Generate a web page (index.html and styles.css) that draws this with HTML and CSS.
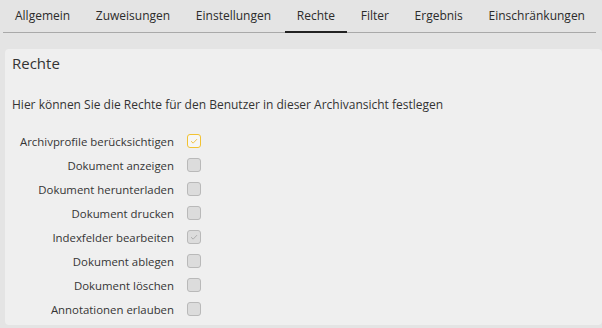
FILE: index.html
```html
<!DOCTYPE html>
<html lang="de">
<head>
<meta charset="utf-8">
<link rel="stylesheet" href="styles.css">
</head>
<body>
<nav class="tabs">
  <div class="tab">Allgemein</div>
  <div class="tab">Zuweisungen</div>
  <div class="tab">Einstellungen</div>
  <div class="tab active">Rechte</div>
  <div class="tab">Filter</div>
  <div class="tab">Ergebnis</div>
  <div class="tab">Einschränkungen</div>
</nav>
<section class="panel">
  <h2 class="title">Rechte</h2>
  <p class="desc">Hier können Sie die Rechte für den Benutzer in dieser Archivansicht festlegen</p>
  <div class="rows">
    <div class="row"><span class="label">Archivprofile berücksichtigen</span><span class="cb cb-focus"><svg viewBox="0 0 14 14"><path d="M3.5 7.2 L6 9.5 L10.5 4.8" /></svg></span></div>
    <div class="row"><span class="label">Dokument anzeigen</span><span class="cb"></span></div>
    <div class="row"><span class="label">Dokument herunterladen</span><span class="cb"></span></div>
    <div class="row"><span class="label">Dokument drucken</span><span class="cb"></span></div>
    <div class="row"><span class="label">Indexfelder bearbeiten</span><span class="cb cb-disabled"><svg viewBox="0 0 14 14"><path d="M3.5 7.2 L6 9.5 L10.5 4.8" /></svg></span></div>
    <div class="row"><span class="label">Dokument ablegen</span><span class="cb"></span></div>
    <div class="row"><span class="label">Dokument löschen</span><span class="cb"></span></div>
    <div class="row"><span class="label">Annotationen erlauben</span><span class="cb"></span></div>
  </div>
</section>
</body>
</html>
```
FILE: styles.css
```css
html, body {
  margin: 0;
  padding: 0;
  background: #e4e4e4;
  font-family: "Open Sans", "Noto Sans", sans-serif;
  color: #333;
}
.tabs {
  display: flex;
  margin: 0 6px 0 3px;
  height: 32px;
  border-bottom: 1px solid #a9a9a9;
}
.tab {
  padding: 0 12px;
  margin-right: 1.7px;
  height: 31px;
  line-height: 31px;
  font-size: 12px;
  color: #2b2b2b;
  white-space: nowrap;
}
.tab.active {
  border-bottom: 2px solid #222;
}
.panel {
  margin: 16px 0 0 5px;
  background: #efefef;
  border-radius: 4px;
  padding: 4px 7px 4px 7px;
}
.title {
  margin: 0;
  font-size: 15px;
  line-height: 20px;
  font-weight: 500;
  color: #333;
}
.desc {
  margin: 24px 0 0 0;
  font-size: 12px;
  line-height: 16px;
  color: #333;
}
.rows {
  margin-top: 16px;
  display: flex;
  flex-direction: column;
}
.row {
  display: flex;
  align-items: center;
  height: 24px;
}
.label {
  width: 162px;
  text-align: right;
  font-size: 11.4px;
  color: #353535;
  white-space: nowrap;
}
.cb {
  margin-left: 13px;
  width: 14px;
  height: 14px;
  box-sizing: border-box;
  border: 1px solid #b9b9b9;
  border-radius: 3px;
  background: #dcdcdc;
  display: flex;
}
.cb svg {
  width: 12px;
  height: 12px;
  fill: none;
  stroke-width: 1.1;
}
.cb-focus {
  border-color: #f2c232;
  background: #f6f6f6;
}
.cb-focus svg path { stroke: #f0c040; }
.cb-disabled svg path { stroke: #aaa; }
```
